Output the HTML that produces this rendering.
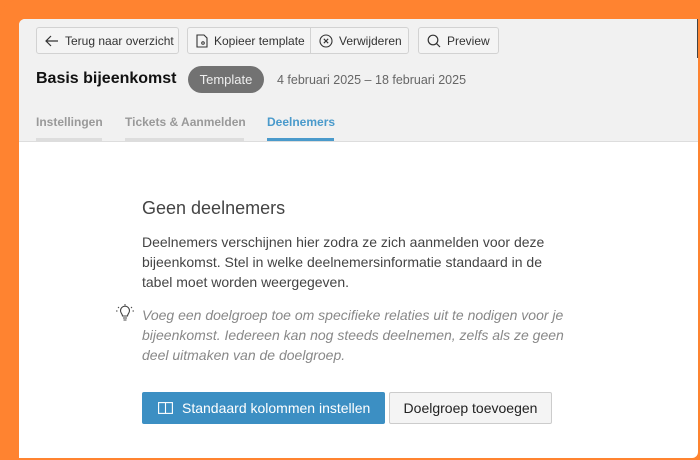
<!DOCTYPE html>
<html><head><style>
*{box-sizing:border-box;margin:0;padding:0}
body{width:700px;height:460px;background:#ff8330;font-family:"Liberation Sans",sans-serif;position:relative;overflow:hidden}
.outer{position:absolute;left:0;top:0;width:700px;height:460px;background:#ff8330;border-radius:18px 0 0 0}
.panel{position:absolute;left:19px;top:19px;width:679px;height:439px;background:#fff;border-radius:6px 0 6px 0;overflow:hidden}
.head{position:absolute;left:0;top:0;width:679px;height:123px;background:#f1f1f1;border-bottom:1px solid #ddd}
.btn{position:absolute;top:8px;height:27px;border:1px solid #d2d2d2;background:#f4f4f4;border-radius:3px;font-size:12px;color:#333;display:flex;align-items:center;padding:0 8px;gap:6px;white-space:nowrap}
.btn svg{flex-shrink:0}
.abs{position:absolute}
.tab{position:absolute;top:96px;font-size:12px;font-weight:bold;color:#999}
.ul{position:absolute;top:119px;height:3px;background:#ddd}
</style></head><body>
<div class="outer"></div>
<div class="panel">
<div class="head">
 <div class="btn" style="left:17px;width:143px"><svg width="14" height="12" viewBox="0 0 14 12"><path d="M13 6H1M6 1L1 6l5 5" fill="none" stroke="#333" stroke-width="1.2"/></svg>Terug naar overzicht</div>
 <div class="btn" style="left:168px;width:124px;border-radius:3px 0 0 3px"><svg width="12" height="14" viewBox="0 0 12 14"><path d="M1 1h7l3 3v9H1z" fill="none" stroke="#333" stroke-width="1.1"/><circle cx="7" cy="9" r="1.3" fill="none" stroke="#333"/></svg>Kopieer template</div>
 <div class="btn" style="left:291px;width:99px;border-radius:0 3px 3px 0"><svg width="14" height="14" viewBox="0 0 14 14"><circle cx="7" cy="7" r="6" fill="none" stroke="#333" stroke-width="1.1"/><path d="M4.8 4.8l4.4 4.4M9.2 4.8l-4.4 4.4" stroke="#333" stroke-width="1.1"/></svg>Verwijderen</div>
 <div class="btn" style="left:399px;width:81px"><svg width="14" height="14" viewBox="0 0 14 14"><circle cx="6" cy="6" r="4.8" fill="none" stroke="#333" stroke-width="1.2"/><path d="M9.5 9.5L13 13" stroke="#333" stroke-width="1.2"/></svg>Preview</div>
 <div class="abs" style="left:17px;top:51px;font-size:16px;font-weight:bold;color:#111">Basis bijeenkomst</div>
 <div class="abs" style="left:169px;top:47px;width:76px;height:27px;border-radius:14px;background:#727272;color:#eee;font-size:13px;text-align:center;line-height:27px">Template</div>
 <div class="abs" style="left:258px;top:54px;font-size:12.5px;color:#666">4 februari 2025 – 18 februari 2025</div>
 <div class="tab" style="left:17px">Instellingen</div><div class="ul" style="left:17px;width:66px"></div>
 <div class="tab" style="left:106px">Tickets &amp; Aanmelden</div><div class="ul" style="left:106px;width:119px"></div>
 <div class="tab" style="left:248px;color:#4a9acb">Deelnemers</div><div class="ul" style="left:248px;width:67px;background:#4a9acb"></div>
 <div class="abs" style="left:678px;top:0;width:2px;height:39px;background:#444"></div>
</div>
<div class="abs" style="left:123px;top:179px;font-size:18px;color:#444">Geen deelnemers</div>
<div class="abs" style="left:123px;top:213px;width:420px;font-size:14px;line-height:20px;color:#444">Deelnemers verschijnen hier zodra ze zich aanmelden voor deze bijeenkomst. Stel in welke deelnemersinformatie standaard in de tabel moet worden weergegeven.</div>
<svg class="abs" style="left:97px;top:285px" width="18" height="18" viewBox="0 0 18 18"><path d="M6.5 12c0-2-2-3-2-5.3a4.5 4.5 0 019 0c0 2.3-2 3.3-2 5.3z M7 14h4M7.5 16h3" fill="none" stroke="#444" stroke-width="1.1"/><path d="M9 0v1.5M2 3l1 1M16 3l-1 1M0 7h1.5M16.5 7H18" stroke="#444" stroke-width="1"/></svg>
<div class="abs" style="left:123px;top:286px;width:430px;font-size:14px;line-height:20px;color:#888;font-style:italic">Voeg een doelgroep toe om specifieke relaties uit te nodigen voor je bijeenkomst. Iedereen kan nog steeds deelnemen, zelfs als ze geen deel uitmaken van de doelgroep.</div>
<div class="abs" style="left:123px;top:373px;width:243px;height:32px;background:#3c8fc3;border-radius:2px;color:#fff;font-size:14px;display:flex;align-items:center;padding-left:16px;gap:9px"><svg width="15" height="12" viewBox="0 0 15 12"><rect x="0.6" y="0.6" width="13.8" height="10.8" fill="none" stroke="#fff" stroke-width="1.1"/><path d="M7.5 0.6v10.8" stroke="#fff" stroke-width="1.1"/></svg>Standaard kolommen instellen</div>
<div class="abs" style="left:370px;top:373px;width:163px;height:32px;background:#f4f4f4;border:1px solid #ccc;border-radius:2px;color:#222;font-size:14px;text-align:center;line-height:30px">Doelgroep toevoegen</div>
</div>
</body></html>
